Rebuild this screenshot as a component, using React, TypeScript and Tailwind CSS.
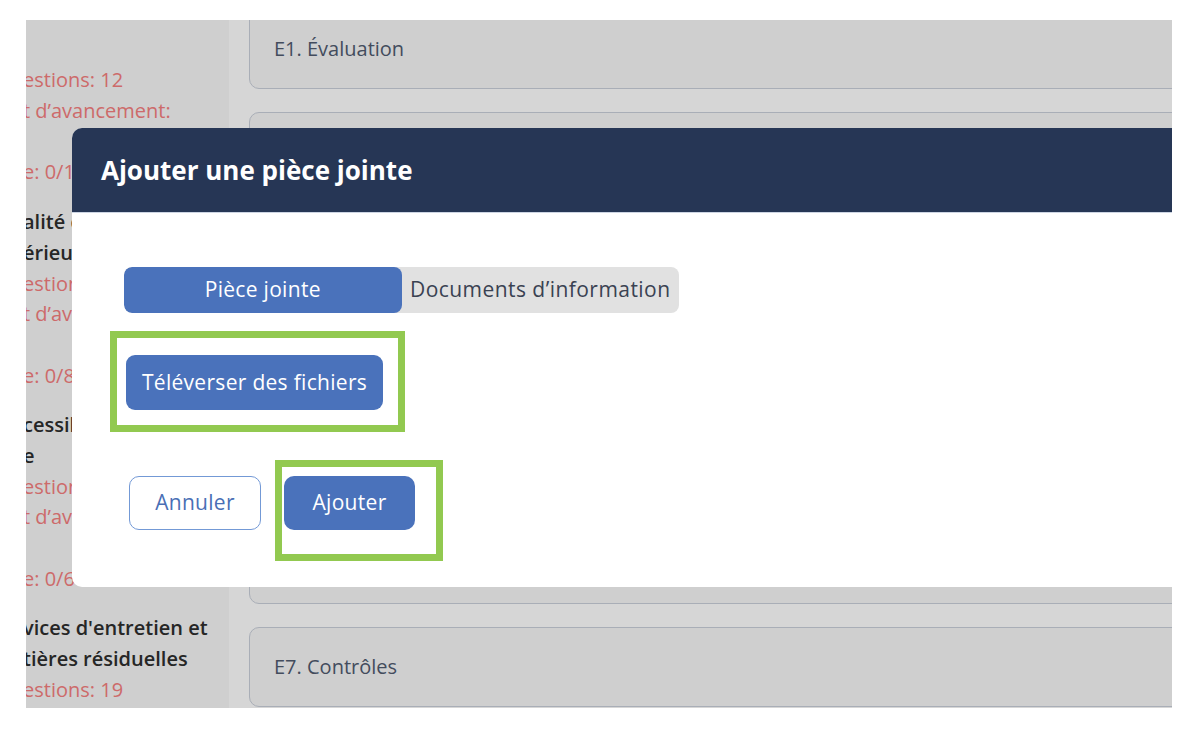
import React from "react";

const groups = [
  {
    title: ["", "é"],
    titleBlue: true,
    lines: ["estions: 12", "t d’avancement:", "", "e: 0/12"],
  },
  {
    title: ["alité de l’air", "érieur"],
    lines: ["estions: 8", "t d’avancement:", "", "e: 0/8"],
  },
  {
    title: ["cessibilité", "e"],
    lines: ["estions: 6", "t d’avancement:", "", "e: 0/6"],
  },
  {
    title: ["vices d'entretien et", "tières résiduelles"],
    lines: ["estions: 19", "t d’avancement:", "", "e: 0/19"],
  },
];

const cards = ["E1. Évaluation", "E2.", "E3.", "E4.", "E5.", "E6.", "E7. Contrôles"];

function Sidebar() {
  return (
    <aside className="w-[203px] shrink-0 overflow-hidden bg-[#cfcfcf]">
      <div className="-mt-[16px] -ml-[3px] flex flex-col gap-[19px] whitespace-nowrap text-[20px] leading-[30.7px]">
        {groups.map((g, i) => (
          <div key={i}>
            {g.title.map((t, j) => (
              <div
                key={j}
                className={
                  g.titleBlue
                    ? "h-[30.7px] -ml-[9px] text-[#86b6e6] font-semibold"
                    : "h-[30.7px] font-semibold text-[#262626]"
                }
              >
                {t}
              </div>
            ))}
            {g.lines.map((t, j) => (
              <div key={j} className="h-[30.7px] text-[#cd6a6a]">
                {t}
              </div>
            ))}
          </div>
        ))}
      </div>
    </aside>
  );
}

function Cards() {
  return (
    <main className="flex-1 overflow-hidden bg-[#d6d6d6] pl-[20px]">
      <div className="-mt-[11px] -mr-6 flex flex-col gap-[23px]">
        {cards.map((c, i) => (
          <div
            key={i}
            className="flex h-[80px] items-center rounded-[10px] border-[1.5px] border-[#a9aeb7] bg-[#cfcfcf] px-[24px] text-[20px] font-medium text-[#434c5d]"
          >
            {i === 0 || i === 6 ? c : ""}
          </div>
        ))}
      </div>
    </main>
  );
}

function Modal() {
  return (
    <div className="absolute left-[46px] top-[108px] w-[1150px] overflow-hidden rounded-l-[10px] bg-white">
      <div className="flex h-[85px] items-center border-b border-[#cdd5e3] bg-[#263655] px-[29px]">
        <h2 className="text-[26px] font-bold text-white">Ajouter une pièce jointe</h2>
      </div>
      <div className="flex flex-col items-start pb-[26px] tracking-[0.3px]">
        <div className="ml-[52px] mt-[54px] grid h-[46px] w-[555px] grid-cols-2 overflow-hidden rounded-[8px] bg-[#e1e1e1] text-[21px]">
          <button className="rounded-[8px] bg-[#4a72bb] font-medium text-white">Pièce jointe</button>
          <button className="tracking-[0.45px] text-[#3a4252]">Documents d’information</button>
        </div>

        <div className="ml-[38px] mt-[18px] h-[101px] w-[295px] border-[7px] border-[#92c950] pl-[9px] pt-[17px]">
          <button className="h-[55px] w-[257px] rounded-[9px] bg-[#4a72bb] text-[21px] font-medium text-white">
            Téléverser des fichiers
          </button>
        </div>

        <div className="ml-[57px] mt-[28px] flex items-start">
          <button className="mt-[16px] h-[54px] w-[132px] rounded-[10px] border-[1.5px] border-[#7399d6] bg-white text-[21px] text-[#4a6fb5]">
            Annuler
          </button>
          <div className="ml-[14px] h-[101px] w-[168px] border-[7px] border-[#92c950] pl-[2px] pt-[9px]">
            <button className="h-[54px] w-[131px] rounded-[10px] bg-[#4a72bb] text-[21px] font-medium text-white">
              Ajouter
            </button>
          </div>
        </div>
      </div>
    </div>
  );
}

export default function App() {
  return (
    <div
      className="min-h-screen bg-white pl-[26px] pt-[20px]"
      style={{ fontFamily: '"Open Sans", "Noto Sans", sans-serif' }}
    >
      <div className="relative flex h-[688px] w-[1146px] overflow-hidden">
        <Sidebar />
        <Cards />
        <Modal />
      </div>
    </div>
  );
}
